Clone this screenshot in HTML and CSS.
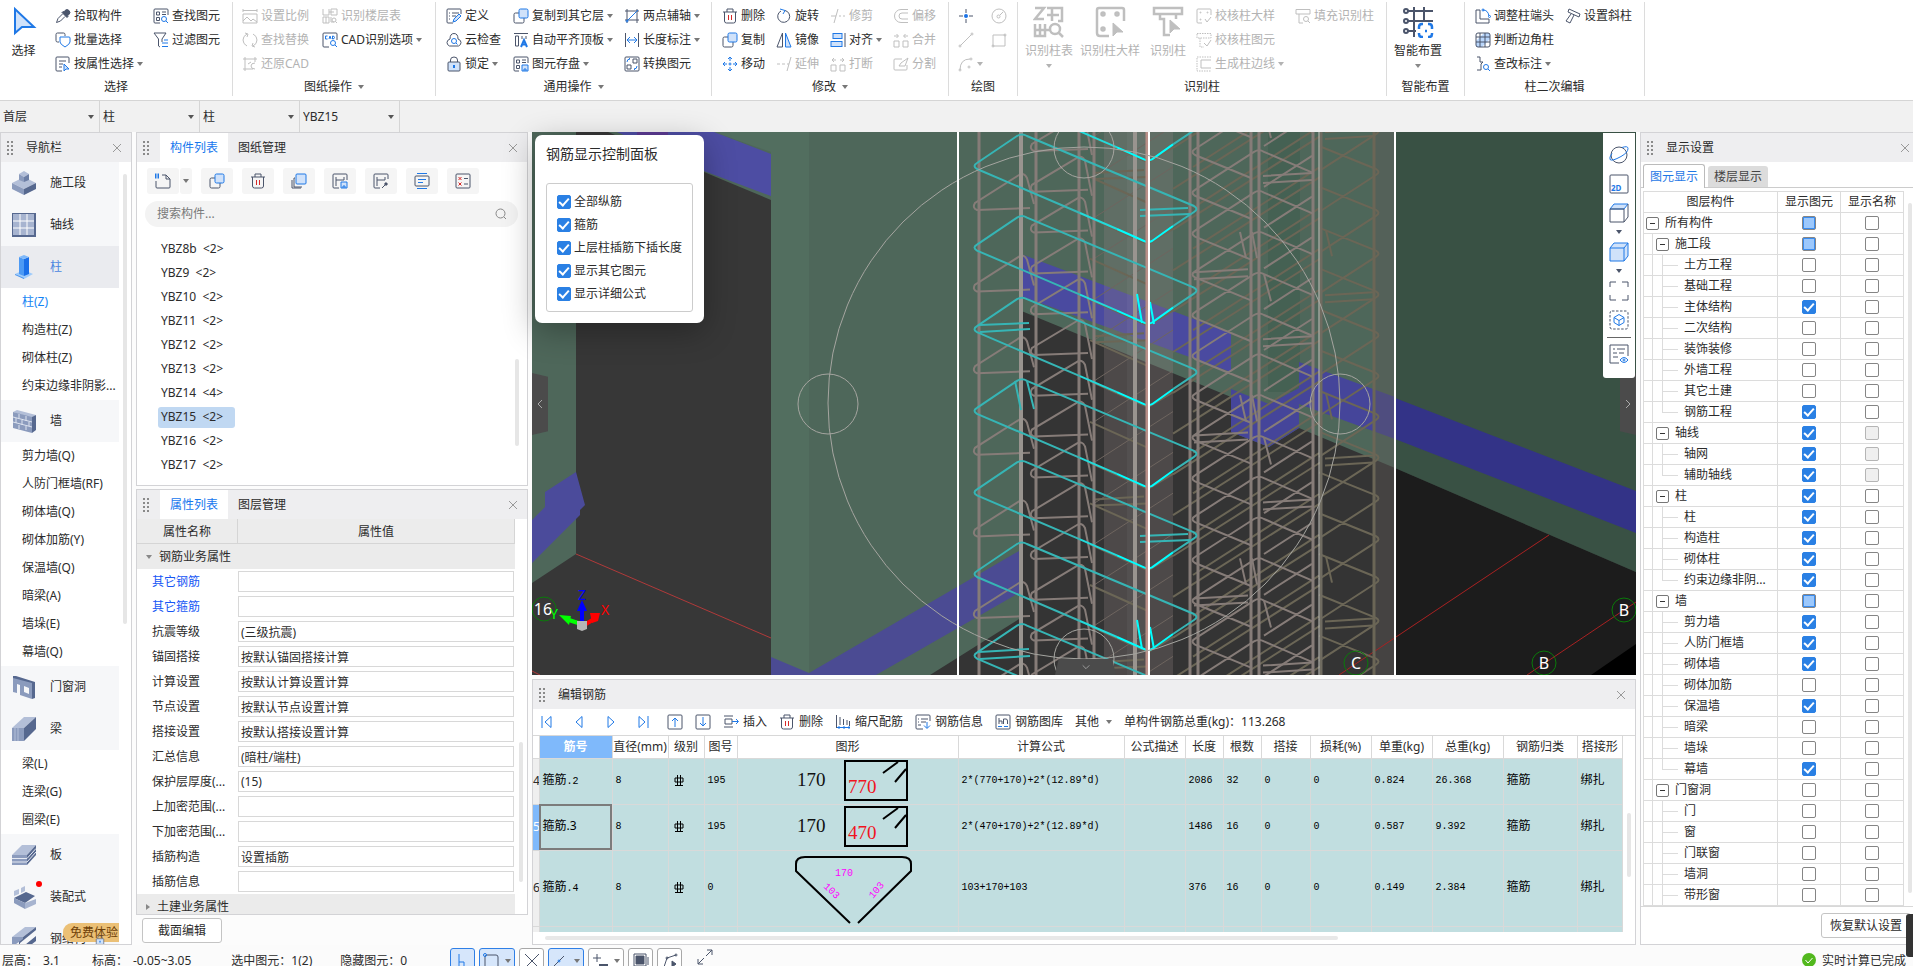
FILE: index.html
```
<!DOCTYPE html>
<html lang="zh-CN">
<head>
    <meta charset="UTF-8">
    <meta name="viewport" content="width=device-width, initial-scale=1.0">
    <title>钢筋三维</title>
    <link rel="stylesheet" href="styles.css">
</head>
<body>
    <!-- icon sprite -->
    <svg class="sprite" aria-hidden="true">
        <symbol id="i-cursor" viewBox="0 0 32 32"><path class="af" stroke-width="2" d="M7 3v24l7-6h12z"/></symbol>
        <symbol id="i-dropper" viewBox="0 0 16 16"><path fill="currentColor" d="M10 2.500q2-2 4 0t0 4l-1.500 1 .5 1-1 1-5-5 1-1 1 .5z"/><path d="M7.500 6L3 10.500 1.500 14.500 5.500 13 10 8.500"/></symbol>
        <symbol id="i-batch" viewBox="0 0 16 16"><path d="M4 10H2.500Q1 10 1 8.500v-6Q1 1 2.500 1h6Q10 1 10 2.500V4"/><path class="a" d="M5 5h9q1 0 1 1v4q0 2-5 5-5-3-5-5z"/></symbol>
        <symbol id="i-attr" viewBox="0 0 16 16"><path d="M14 7V2q0-1-1-1H2Q1 1 1 2v12q0 1 1 1h5M4 5h7M4 8h4M4 11h3"/><path class="af" d="M9 8v7l2-2h3z"/></symbol>
        <symbol id="i-find" viewBox="0 0 16 16"><path d="M15 7V2q0-1-1-1H2Q1 1 1 2v12q0 1 1 1h5M3.500 4h3v3h-3zM9 4h4M9 6.500h4M3.500 9.500h3v3h-3z"/><circle class="a" cx="11" cy="11" r="2.500"/><path class="a" d="M13 13l2 2"/></symbol>
        <symbol id="i-filter" viewBox="0 0 16 16"><path d="M1 1h12L9 7v3M1 1l4.500 6v7L7 15"/><path class="a" d="M9 11h6M9 14.500h6M11 8h4"/></symbol>
        <symbol id="i-scale" viewBox="0 0 16 16"><path d="M1 1v3M15 1v3M1 2.500h14M1 6h14v9H1zM1 13l4-4 4 4 2-2 4 3"/></symbol>
        <symbol id="i-swap" viewBox="0 0 16 16"><path d="M5 2Q1 4 1 8t4 6M11 2q4 2 4 6t-4 6M3 1l3 1-1 3M13 15l-3-1 1-3"/></symbol>
        <symbol id="i-restore" viewBox="0 0 16 16"><path d="M1 3h14M1 13h10M3 1v14M13 1v5M13 7q-4 0-4 3t4 3M6 8l3-2"/></symbol>
        <symbol id="i-floor" viewBox="0 0 16 16"><path d="M1 1v6h6V1M7 4h5M9 1h6v6H9zM1 9h6v6H1zM4 9v6M9 9v5h3"/><circle cx="12" cy="12" r="2"/><path d="M13.500 13.500L15 15"/></symbol>
        <symbol id="i-cad" viewBox="0 0 16 16"><path d="M15 8V2q0-1-1-1H2Q1 1 1 2v12q0 1 1 1h5"/><path class="a" d="M5.500 4H3.500v3h2M7 7l1-3 1 3M10.500 4v3q2 0 2-1.500T10.500 4M13 13l2 2"/><circle class="a" cx="11" cy="11" r="2.500"/></symbol>
        <symbol id="i-define" viewBox="0 0 16 16"><path d="M15 6V2q0-1-1-1H2Q1 1 1 2v12q0 1 1 1h5M3 5h1M6 5h7M3 8h1M6 8h4M3 11h1"/><path class="af" d="M7 14l1-3 5-5 2 2-5 5z"/></symbol>
        <symbol id="i-cloud" viewBox="0 0 16 16"><path d="M3.500 14Q1 13 1 10.500T4 7q0-5.500 4-5.500T12 7q3 1 3 3.500T12.500 14z"/><circle class="a" cx="8" cy="9" r="2.500"/><path class="a" d="M10 11l1.500 1.500"/></symbol>
        <symbol id="i-lock" viewBox="0 0 16 16"><path d="M4.500 6V4q0-3 3.500-3t3.500 3v2"/><rect class="lf" x="2" y="6" width="12" height="9" rx="1"/><path class="a" stroke-width="2" d="M8 9v3"/></symbol>
        <symbol id="i-copy" viewBox="0 0 16 16"><rect x="1" y="5" width="10" height="10" rx="1.500"/><rect class="af" x="6" y="1" width="9" height="9" rx="1.500"/></symbol>
        <symbol id="i-top" viewBox="0 0 16 16"><path d="M1 1.500h14M2.500 4v10h3V4zM9 4v3M13 4v3"/><path class="a" stroke-width="2" d="M8 15l3-7 3 7M9 12.500h4"/></symbol>
        <symbol id="i-save" viewBox="0 0 16 16"><path d="M15 7V2q0-1-1-1H2Q1 1 1 2v12q0 1 1 1h4M3.500 4h3v3h-3zM9 4h4M9 6.500h4M3.500 9.500h3v3h-3z"/><path class="af" d="M9 9h6v6H9zM11 15v-2h2v2"/></symbol>
        <symbol id="i-axis" viewBox="0 0 16 16"><path d="M1 3h14M1 12h14M3 1v14M13 1v14"/><path class="a" d="M3 13L14 2"/><circle class="a" cx="3" cy="13" r="1"/></symbol>
        <symbol id="i-length" viewBox="0 0 16 16"><path d="M1.500 1v14M14.500 1v14"/><path class="a" d="M3 8h10M6 5L3 8l3 3M10 5l3 3-3 3"/></symbol>
        <symbol id="i-convert" viewBox="0 0 16 16"><rect x="1" y="1" width="14" height="14" rx="1"/><path d="M9 3h4v4H9zM3 9h4v4H3z"/><path class="a" d="M3 6q0-3 3-3L5 2M13 10q0 3-3 3l1 1"/></symbol>
        <symbol id="i-trash" viewBox="0 0 16 16"><path d="M1 4h14M5 4V1h6v3M2.500 4v9q0 2 2 2h7q2 0 2-2V4"/><path class="r" d="M6.500 7v5M9.500 7v5"/></symbol>
        <symbol id="i-rotate" viewBox="0 0 16 16"><path d="M9 2.500a6 6 0 1 1-4 .5"/><path class="a" d="M4 1l5 1.500L7 6"/></symbol>
        <symbol id="i-trim" viewBox="0 0 16 16"><path d="M1 8h5M9 8h2M13 8h2M4 15L8 1"/></symbol>
        <symbol id="i-offset" viewBox="0 0 16 16"><path d="M15 1.500H8a6 6 0 0 0 0 13h7M15 5H9a3 3 0 0 0 0 6h6"/></symbol>
        <symbol id="i-mirror" viewBox="0 0 16 16"><path d="M6.500 1v14H1z"/><path class="af" d="M9.500 1v14H15z"/></symbol>
        <symbol id="i-align" viewBox="0 0 16 16"><path d="M15 1v14"/><rect class="af" x="3" y="1.500" width="9" height="5"/><rect class="af" x="1" y="9.500" width="11" height="5"/></symbol>
        <symbol id="i-merge" viewBox="0 0 16 16"><path d="M1 9h5v6H1zM10 9h5v6h-5zM1 4h4M3.500 2l2 2-2 2M15 4h-4M12.500 2l-2 2 2 2"/></symbol>
        <symbol id="i-break" viewBox="0 0 16 16"><path d="M1 9h5v6H1zM10 9h5v6h-5zM2 4h4M4 2L2 4l2 2M14 4h-4M12 2l2 2-2 2"/></symbol>
        <symbol id="i-move" viewBox="0 0 16 16"><path class="a" d="M8 1v4M8 11v4M1 8h4M11 8h4M6 3l2-2 2 2M6 13l2 2 2-2M3 6L1 8l2 2M13 6l2 2-2 2"/><circle class="a" cx="8" cy="8" r="1"/></symbol>
        <symbol id="i-extend" viewBox="0 0 16 16"><path d="M1 8h3M6 8h3M11 8h2M11 15L15 1"/></symbol>
        <symbol id="i-split" viewBox="0 0 16 16"><path d="M9 3H2Q1 3 1 4v9q0 1 1 1h11q1 0 1-1V9M6 10l2-3 7-5-3 8z"/></symbol>
        <symbol id="i-point" viewBox="0 0 16 16"><path d="M8 1v4M8 11v4M1 8h4M11 8h4"/><circle cx="8" cy="8" r="2" fill="#1a73e8" stroke="none"/></symbol>
        <symbol id="i-circle" viewBox="0 0 16 16"><circle cx="8" cy="8" r="7"/><circle cx="7.500" cy="8.500" r="1.500"/><path d="M9 7l3-3"/></symbol>
        <symbol id="i-line" viewBox="0 0 16 16"><path d="M2.500 13.500l11-11"/><circle cx="2" cy="14" r="1"/><circle cx="14" cy="2" r="1"/></symbol>
        <symbol id="i-rect" viewBox="0 0 16 16"><path d="M2 3h12v11H2z"/><circle cx="2" cy="14" r="1"/><circle cx="14" cy="3" r="1"/></symbol>
        <symbol id="i-arc" viewBox="0 0 16 16"><path d="M2 14Q2 3 12 3"/><circle cx="2" cy="14" r="1"/><circle cx="13" cy="3" r="1"/><circle cx="11" cy="11" r="1"/></symbol>
        <symbol id="i-coltable" viewBox="0 0 32 32"><g stroke-width="2.500"><path d="M2 2h9L2 13h9M14 2h15v13h-4M14 9h12M19 2v13M2 18v12h10V18M2 24h15M7 18v12"/><circle cx="22" cy="23" r="5"/><path d="M26 27l4 4"/></g></symbol>
        <symbol id="i-coldetail" viewBox="0 0 32 32"><g stroke-width="2.500"><path d="M30 15V4q0-2-2-2H5Q3 2 3 4v23q0 3 3 3h9"/><circle cx="9" cy="8" r="1.500"/><circle cx="23" cy="8" r="1.500"/><circle cx="9" cy="23" r="1.500"/></g><path fill="currentColor" d="M19 17v13l4-4h6z"/></symbol>
        <symbol id="i-colpick" viewBox="0 0 32 32"><path stroke-width="2.500" d="M2 2h28v6H2zM8 8v5h4v16h6M24 8v5"/><path fill="currentColor" d="M18 14v13l4-4h6z"/></symbol>
        <symbol id="i-check1" viewBox="0 0 16 16"><path d="M15 7V2q0-1-1-1H2Q1 1 1 2v12q0 1 1 1h4M9 11l2 3 4-5"/><circle cx="4.500" cy="4.500" r=".5"/><circle cx="11.500" cy="4.500" r=".5"/><circle cx="4.500" cy="11.500" r=".5"/></symbol>
        <symbol id="i-check2" viewBox="0 0 16 16"><path stroke-dasharray="1.500 1" d="M1 1.500h14V6H1zM4 6v9h4"/><path d="M8 11l3 3 4-6"/></symbol>
        <symbol id="i-edge" viewBox="0 0 16 16"><path stroke-dasharray="1.500 1" d="M15 1H1v14h14"/><path d="M15 4H5v8h10"/></symbol>
        <symbol id="i-fillcol" viewBox="0 0 16 16"><path d="M1 1.500h14V6H1zM4 6v9h4"/><circle cx="11" cy="11" r="2.500"/><path d="M13 13l2 2"/></symbol>
        <symbol id="i-grid" viewBox="0 0 32 32"><g stroke-width="2"><path d="M6 5h25M6 15h25M6 25h8M12 1v30M22 1v13"/><circle cx="4" cy="5" r="2"/><circle cx="4" cy="15" r="2"/><circle cx="4" cy="25" r="2"/></g><path class="a" stroke-width="2.500" d="M17 23v-2q0-3 3-3h1M26 18h1q3 0 3 3v2M30 27v1q0 3-3 3h-1M21 31h-1q-3 0-3-3v-1M23 25h2"/></symbol>
        <symbol id="i-end" viewBox="0 0 16 16"><path d="M1 2h4v9h9v4H1z"/><path class="a" d="M8 2q5 0 6 6"/><circle class="a" cx="8" cy="2" r="1"/><circle class="a" cx="14.500" cy="8.500" r="1"/></symbol>
        <symbol id="i-corner" viewBox="0 0 16 16"><path fill="#b9d6fb" d="M9 1h6v6L7 15H1V9z" stroke="none"/><rect x="1" y="1" width="14" height="14" rx="2"/><path d="M5 1v14M10 1v14M1 5h14M1 10h14"/></symbol>
        <symbol id="i-brace" viewBox="0 0 16 16"><path d="M2 1h3v5h3L6 8v6H2"/><circle class="a" cx="11" cy="11" r="2.500"/><path class="a" d="M13 13l2 2"/></symbol>
        <symbol id="i-slant" viewBox="0 0 16 16"><path d="M4 1l11 5-1 3L3 4zM6 6l-5 7 4 2 4-8"/></symbol>
        <symbol id="i-close" viewBox="0 0 16 16"><path d="M4 4l8 8M12 4l-8 8"/></symbol>
        <symbol id="i-new" viewBox="0 0 16 16"><path d="M7 2h4l4 4v8q0 1-1 1H2q-1 0-1-1V8M11 2v4h4"/><path class="a" stroke-width="5" stroke-dasharray="1.500 1" d="M0 3h5"/></symbol>
        <symbol id="i-layers" viewBox="0 0 16 16"><path d="M4 5H3v9h8M1 7v8h9"/><rect class="af" x="5" y="1" width="10" height="10" rx="1"/></symbol>
        <symbol id="i-saveas" viewBox="0 0 16 16"><path d="M15 7V2q0-1-1-1H2Q1 1 1 2v12q0 1 1 1h5M4 4v9M4 7h8V4"/><path class="af" d="M9 9h6v6H9zM11 15v-2h2v2"/></symbol>
        <symbol id="i-pickas" viewBox="0 0 16 16"><path d="M15 6V2q0-1-1-1H2Q1 1 1 2v12q0 1 1 1h5M4 4v9M4 7h8V4M9 15l4-4"/><path stroke-width="3" d="M12 12l2-2"/></symbol>
        <symbol id="i-list" viewBox="0 0 16 16"><rect x="1" y="3" width="14" height="10" rx="1"/><path class="a" d="M3 .5h10M3 15.500h10M4 6.500h8M4 9.500h5"/></symbol>
        <symbol id="i-check-list" viewBox="0 0 16 16"><rect x="1" y="1" width="14" height="14" rx="1"/><path d="M9 5.500h4M9 11h4"/><path class="r" d="M3.500 4l3 3M6.500 4l-3 3M3.500 9.500l3 3M6.500 9.500l-3 3"/></symbol>
        <symbol id="i-search" viewBox="0 0 16 16"><circle cx="7.500" cy="7.500" r="4.500"/><path d="M11 11l2 2"/></symbol>
        <symbol id="i-first" viewBox="0 0 16 16"><path class="a" d="M3 2v12M12 2.500v11L6 8z"/></symbol>
        <symbol id="i-prev" viewBox="0 0 16 16"><path class="a" d="M11 2.500v11L5 8z"/></symbol>
        <symbol id="i-next" viewBox="0 0 16 16"><path class="a" d="M5 2.500v11L11 8z"/></symbol>
        <symbol id="i-last" viewBox="0 0 16 16"><path class="a" d="M13 2v12M4 2.500v11L10 8z"/></symbol>
        <symbol id="i-up" viewBox="0 0 16 16"><rect x="1" y="1" width="14" height="14" rx="1"/><path class="a" d="M8 13V4M5 7l3-3 3 3"/></symbol>
        <symbol id="i-down" viewBox="0 0 16 16"><rect x="1" y="1" width="14" height="14" rx="1"/><path class="a" d="M8 3v9M5 9l3 3 3-3"/></symbol>
        <symbol id="i-insert" viewBox="0 0 16 16"><path d="M1 2h9M1 13h9M2 5h7v5H2z"/><path class="a" d="M9 7.500h6M13 5l2.500 2.500L13 10"/></symbol>
        <symbol id="i-ruler" viewBox="0 0 16 16"><path d="M1.500 1v13M5 3v8M8.500 5v6M12 6v5M14.500 7v5"/><path class="a" d="M2 13.500h13M4 12v3M9 12v3M14 12v3"/></symbol>
        <symbol id="i-info" viewBox="0 0 16 16"><path d="M15 7V2q0-1-1-1H2Q1 1 1 2v12q0 1 1 1h6M3 5h1M6 5h7M3 8h1M6 8h5M3 11h3"/><path class="a" d="M12 8v6M9 11.500l3 3 3-3"/></symbol>
        <symbol id="i-lib" viewBox="0 0 16 16"><rect x="1" y="1" width="14" height="14" rx="1"/><path d="M4 4v6M4 7h3v3M8.500 5H11q1.500 0 1.500 2v3M8.500 5v5"/><path class="a" d="M3 12.500h4M9 12.500h4"/></symbol>
        <symbol id="i-orbit" viewBox="0 0 20 20"><circle cx="10" cy="10" r="8"/><path class="a" d="M13 2.500q6-2 6 1 0 4-7 8-9 5-11 3-1-2 2-6"/></symbol>
        <symbol id="i-2d" viewBox="0 0 20 20"><rect x="1" y="1" width="18" height="18" rx="1"/></symbol>
        <symbol id="i-cube" viewBox="0 0 20 20"><path class="af" d="M1 6l4-5h14l-4 5z"/><path d="M1 6h14v13H1zM15 19l4-5V1"/></symbol>
        <symbol id="i-cube-b" viewBox="0 0 20 20"><path class="af" d="M1 6l4-5h14v13l-4 5H1zM1 6h14v13M15 6l4-5"/></symbol>
        <symbol id="i-fit" viewBox="0 0 20 20"><path d="M1 6V1h6M13 1h6v5M19 14v5h-6M7 19H1v-5"/></symbol>
        <symbol id="i-sel3d" viewBox="0 0 20 20"><rect x="1" y="1" width="18" height="18" rx="2" stroke-dasharray="2.500 1.500"/><path class="a" d="M10 4.500l5 3v5l-5 3-5-3v-5zM5 7.500l5 3 5-3M10 10.500v5"/></symbol>
        <symbol id="i-view" viewBox="0 0 20 20"><path d="M19 12V1H1v18h9M4 5h2M8 5h8M4 9h4M10 9h5M4 13h5"/><path class="a" d="M11 16q4-5 8 0-4 5-8 0z"/><circle class="a" cx="15" cy="16" r="1"/></symbol>
        <symbol id="n-stage" viewBox="0 0 24 24"><path fill="#b3bfd8" d="M0 12l12-6 12 6-12 6z"/><path fill="#8b9bbd" d="M0 12l12 6v6L0 18z"/><path fill="#56688f" d="M24 12l-12 6v6l12-6z"/><path fill="#b3bfd8" d="M7 3l5-3 5 3-5 3z"/><path fill="#8b9bbd" d="M7 3l5 3v5l-5-2z"/><path fill="#6c7ea5" d="M17 3l-5 3v5l5-2z"/></symbol>
        <symbol id="n-axis" viewBox="0 0 24 24"><path fill="#56688f" d="M0 0h24v24H0z"/><path fill="#a7b4d0" d="M1 1h21v21H1z"/><path stroke="#fff" d="M8 1v21M15 1v21M1 8h21M1 15h21"/></symbol>
        <symbol id="n-col" viewBox="0 0 24 24"><path fill="#9ecbfb" d="M3 19l9-4 9 4-9 5z"/><path fill="#4a94ec" d="M3 19l9 4v1l-9-4z"/><path fill="#4d9af4" d="M7 2l5 2v17l-5-2z"/><path fill="#1a6fe8" d="M17 2l-5 2v17l5-2z"/><path fill="#7db8fb" d="M7 2l5-2 5 2-5 2z"/></symbol>
        <symbol id="n-wall" viewBox="0 0 24 24"><path fill="#b3bfd8" d="M1 3l4-2 19 5-5 3z"/><path fill="#8b9bbd" d="M1 3l19 5v16L1 19z"/><path fill="#56688f" d="M20 8l4-2v15l-4 3z"/><path stroke="#dde3ef" d="M1 8l19 5M1 13l19 5M7 5v4M14 7v5M10 11v5M4 9v5M17 13v4M7 16v4M14 17v4"/></symbol>
        <symbol id="n-door" viewBox="0 0 24 24"><path fill="#56688f" d="M1 1h3l19 6v16l-3 1V9L1 4z"/><path fill="#8b9bbd" fill-rule="evenodd" d="M1 3l19 5v16l-12-4V10l-3-1v9l-4-1zM12 11v6l5 2v-6z"/></symbol>
        <symbol id="n-beam" viewBox="0 0 24 24"><path fill="#b3bfd8" d="M0 11L12 0h12L12 11z"/><path fill="#8b9bbd" d="M0 11h12v13H0z"/><path fill="#56688f" d="M12 11L24 0v12L12 24z"/><path stroke="#b3bfd8" d="M3 11v13M6 11v13"/></symbol>
        <symbol id="n-slab" viewBox="0 0 24 24"><path fill="#b3bfd8" d="M0 12L10 2h14L15 12z"/><path fill="#8b9bbd" d="M0 12h15v10H0z"/><path fill="#56688f" d="M15 12L24 2v10l-9 10z"/><path stroke="#e5e9f2" d="M0 15.500h15l9-10M0 19h15l9-10"/></symbol>
        <symbol id="n-prefab" viewBox="0 0 24 24"><path fill="#b3bfd8" d="M2 6l5-2v5l-5 2zM9 3l4-2v5l-4 2z"/><path fill="#56688f" d="M2 13l12-6 9 4-10 7z"/><path fill="#8b9bbd" d="M2 13l11 5v6L2 18z"/><path fill="#a7b4d0" d="M24 14l-11 4v6l11-5z"/></symbol>
        <symbol id="n-steel" viewBox="0 0 24 24"><path fill="#b3bfd8" d="M0 10L13 0h11L11 10z"/><path fill="#56688f" d="M11 10L24 0v3L8 16v6l16-13v5L11 24H7V11z"/><path fill="#8b9bbd" d="M0 10h11v2L0 20z"/></symbol>
        <symbol id="g-rebar" viewBox="0 0 10 12"><path stroke="#000" d="M3.500 0v10M6.500 0v10M1 3h8v4H1zM1 10.500h8"/></symbol>
    </svg>

    <header class="ribbon">
        <section class="group g-select">
            <div class="tools">
                <button class="big"><svg class="ico"><use href="#i-cursor"/></svg>选择</button>
                <div class="col">
                    <button class="tool"><svg class="ico"><use href="#i-dropper"/></svg>拾取构件</button>
                    <button class="tool"><svg class="ico"><use href="#i-batch"/></svg>批量选择</button>
                    <button class="tool drop"><svg class="ico"><use href="#i-attr"/></svg>按属性选择</button>
                </div>
                <div class="col">
                    <button class="tool"><svg class="ico"><use href="#i-find"/></svg>查找图元</button>
                    <button class="tool"><svg class="ico"><use href="#i-filter"/></svg>过滤图元</button>
                </div>
            </div>
            <h2>选择</h2>
        </section>
        <section class="group g-drawing">
            <div class="tools">
                <div class="col">
                    <button class="tool" disabled><svg class="ico"><use href="#i-scale"/></svg>设置比例</button>
                    <button class="tool" disabled><svg class="ico"><use href="#i-swap"/></svg>查找替换</button>
                    <button class="tool" disabled><svg class="ico"><use href="#i-restore"/></svg>还原CAD</button>
                </div>
                <div class="col">
                    <button class="tool" disabled><svg class="ico"><use href="#i-floor"/></svg>识别楼层表</button>
                    <button class="tool drop"><svg class="ico"><use href="#i-cad"/></svg>CAD识别选项</button>
                </div>
            </div>
            <h2 class="drop">图纸操作</h2>
        </section>
        <section class="group g-common">
            <div class="tools">
                <div class="col">
                    <button class="tool"><svg class="ico"><use href="#i-define"/></svg>定义</button>
                    <button class="tool"><svg class="ico"><use href="#i-cloud"/></svg>云检查</button>
                    <button class="tool drop"><svg class="ico"><use href="#i-lock"/></svg>锁定</button>
                </div>
                <div class="col">
                    <button class="tool drop"><svg class="ico"><use href="#i-copy"/></svg>复制到其它层</button>
                    <button class="tool drop"><svg class="ico"><use href="#i-top"/></svg>自动平齐顶板</button>
                    <button class="tool drop"><svg class="ico"><use href="#i-save"/></svg>图元存盘</button>
                </div>
                <div class="col">
                    <button class="tool drop"><svg class="ico"><use href="#i-axis"/></svg>两点辅轴</button>
                    <button class="tool drop"><svg class="ico"><use href="#i-length"/></svg>长度标注</button>
                    <button class="tool"><svg class="ico"><use href="#i-convert"/></svg>转换图元</button>
                </div>
            </div>
            <h2 class="drop">通用操作</h2>
        </section>
        <section class="group g-modify">
            <div class="tools">
                <div class="col">
                    <button class="tool"><svg class="ico"><use href="#i-trash"/></svg>删除</button>
                    <button class="tool"><svg class="ico"><use href="#i-copy"/></svg>复制</button>
                    <button class="tool"><svg class="ico"><use href="#i-move"/></svg>移动</button>
                </div>
                <div class="col">
                    <button class="tool"><svg class="ico"><use href="#i-rotate"/></svg>旋转</button>
                    <button class="tool"><svg class="ico"><use href="#i-mirror"/></svg>镜像</button>
                    <button class="tool" disabled><svg class="ico"><use href="#i-extend"/></svg>延伸</button>
                </div>
                <div class="col">
                    <button class="tool" disabled><svg class="ico"><use href="#i-trim"/></svg>修剪</button>
                    <button class="tool drop"><svg class="ico"><use href="#i-align"/></svg>对齐</button>
                    <button class="tool" disabled><svg class="ico"><use href="#i-break"/></svg>打断</button>
                </div>
                <div class="col">
                    <button class="tool" disabled><svg class="ico"><use href="#i-offset"/></svg>偏移</button>
                    <button class="tool" disabled><svg class="ico"><use href="#i-merge"/></svg>合并</button>
                    <button class="tool" disabled><svg class="ico"><use href="#i-split"/></svg>分割</button>
                </div>
            </div>
            <h2 class="drop">修改</h2>
        </section>
        <section class="group g-draw">
            <div class="tools">
                <div class="col">
                    <button class="tool" aria-label="点"><svg class="ico"><use href="#i-point"/></svg></button>
                    <button class="tool" aria-label="直线" disabled><svg class="ico"><use href="#i-line"/></svg></button>
                    <button class="tool drop" aria-label="弧" disabled><svg class="ico"><use href="#i-arc"/></svg></button>
                </div>
                <div class="col">
                    <button class="tool" aria-label="圆" disabled><svg class="ico"><use href="#i-circle"/></svg></button>
                    <button class="tool" aria-label="矩形" disabled><svg class="ico"><use href="#i-rect"/></svg></button>
                </div>
            </div>
            <h2>绘图</h2>
        </section>
        <section class="group g-detect">
            <div class="tools">
                <button class="big bigdrop" disabled><svg class="ico"><use href="#i-coltable"/></svg>识别柱表</button>
                <button class="big" disabled><svg class="ico"><use href="#i-coldetail"/></svg>识别柱大样</button>
                <button class="big" disabled><svg class="ico"><use href="#i-colpick"/></svg>识别柱</button>
                <div class="col">
                    <button class="tool" disabled><svg class="ico"><use href="#i-check1"/></svg>校核柱大样</button>
                    <button class="tool" disabled><svg class="ico"><use href="#i-check2"/></svg>校核柱图元</button>
                    <button class="tool drop" disabled><svg class="ico"><use href="#i-edge"/></svg>生成柱边线</button>
                </div>
                <div class="col">
                    <button class="tool" disabled><svg class="ico"><use href="#i-fillcol"/></svg>填充识别柱</button>
                </div>
            </div>
            <h2>识别柱</h2>
        </section>
        <section class="group g-smart">
            <div class="tools">
                <button class="big bigdrop"><svg class="ico"><use href="#i-grid"/></svg>智能布置</button>
            </div>
            <h2>智能布置</h2>
        </section>
        <section class="group g-edit">
            <div class="tools">
                <div class="col">
                    <button class="tool"><svg class="ico"><use href="#i-end"/></svg>调整柱端头</button>
                    <button class="tool"><svg class="ico"><use href="#i-corner"/></svg>判断边角柱</button>
                    <button class="tool drop"><svg class="ico"><use href="#i-brace"/></svg>查改标注</button>
                </div>
                <div class="col">
                    <button class="tool"><svg class="ico"><use href="#i-slant"/></svg>设置斜柱</button>
                </div>
            </div>
            <h2>柱二次编辑</h2>
        </section>
    </header>

    <div class="filters">
        <label class="pick"><select aria-label="楼层"><option>首层</option></select></label>
        <label class="pick"><select aria-label="构件大类"><option>柱</option></select></label>
        <label class="pick"><select aria-label="构件类型"><option>柱</option></select></label>
        <label class="pick"><select aria-label="构件"><option>YBZ15</option></select></label>
    </div>

    <main class="work">
        <nav class="panel nav">
            <div class="panel-head"><i class="grip"></i><h3>导航栏</h3><button class="close" aria-label="关闭"><svg class="ico"><use href="#i-close"/></svg></button></div>
            <div class="nav-body">
                <div class="nav-list">
                    <a class="cat" href="#"><svg><use href="#n-stage"/></svg>施工段</a>
                    <a class="cat" href="#"><svg><use href="#n-axis"/></svg>轴线</a>
                    <a class="cat active" href="#"><svg><use href="#n-col"/></svg>柱</a>
                    <a class="sub active" href="#">柱(Z)</a>
                    <a class="sub" href="#">构造柱(Z)</a>
                    <a class="sub" href="#">砌体柱(Z)</a>
                    <a class="sub" href="#">约束边缘非阴影...</a>
                    <a class="cat" href="#"><svg><use href="#n-wall"/></svg>墙</a>
                    <a class="sub" href="#">剪力墙(Q)</a>
                    <a class="sub" href="#">人防门框墙(RF)</a>
                    <a class="sub" href="#">砌体墙(Q)</a>
                    <a class="sub" href="#">砌体加筋(Y)</a>
                    <a class="sub" href="#">保温墙(Q)</a>
                    <a class="sub" href="#">暗梁(A)</a>
                    <a class="sub" href="#">墙垛(E)</a>
                    <a class="sub" href="#">幕墙(Q)</a>
                    <a class="cat" href="#"><svg><use href="#n-door"/></svg>门窗洞</a>
                    <a class="cat" href="#"><svg><use href="#n-beam"/></svg>梁</a>
                    <a class="sub" href="#">梁(L)</a>
                    <a class="sub" href="#">连梁(G)</a>
                    <a class="sub" href="#">圈梁(E)</a>
                    <a class="cat" href="#"><svg><use href="#n-slab"/></svg>板</a>
                    <a class="cat dot" href="#"><svg><use href="#n-prefab"/></svg>装配式</a>
                    <a class="cat" href="#"><svg><use href="#n-steel"/></svg>钢结构<span class="tag">免费体验</span><svg class="ico locked"><use href="#i-lock"/></svg></a>
                </div>
                <i class="bar"></i>
            </div>
        </nav>

        <div class="side">
            <section class="panel comps">
                <div class="panel-head"><i class="grip"></i><button class="tab on">构件列表</button><button class="tab">图纸管理</button><button class="close" aria-label="关闭"><svg class="ico"><use href="#i-close"/></svg></button></div>
                <div class="comp-tools">
                    <div class="pair"><button aria-label="新建"><svg class="ico"><use href="#i-new"/></svg></button><button class="drop" aria-label="更多"></button></div>
                    <button aria-label="复制"><svg class="ico"><use href="#i-copy"/></svg></button>
                    <button aria-label="删除"><svg class="ico"><use href="#i-trash"/></svg></button>
                    <button aria-label="层间复制"><svg class="ico"><use href="#i-layers"/></svg></button>
                    <button aria-label="存档"><svg class="ico"><use href="#i-saveas"/></svg></button>
                    <button aria-label="提取"><svg class="ico"><use href="#i-pickas"/></svg></button>
                    <button aria-label="排序"><svg class="ico"><use href="#i-list"/></svg></button>
                    <button aria-label="检查"><svg class="ico"><use href="#i-check-list"/></svg></button>
                </div>
                <label class="search"><input type="text" placeholder="搜索构件..." aria-label="搜索构件"><svg class="ico"><use href="#i-search"/></svg></label>
                <div class="comp-body">
                    <ul>
                        <li><a href="#">YBZ8b  &lt;2&gt;</a></li>
                        <li><a href="#">YBZ9  &lt;2&gt;</a></li>
                        <li><a href="#">YBZ10  &lt;2&gt;</a></li>
                        <li><a href="#">YBZ11  &lt;2&gt;</a></li>
                        <li><a href="#">YBZ12  &lt;2&gt;</a></li>
                        <li><a href="#">YBZ13  &lt;2&gt;</a></li>
                        <li><a href="#">YBZ14  &lt;4&gt;</a></li>
                        <li><a href="#" class="on">YBZ15  &lt;2&gt;</a></li>
                        <li><a href="#">YBZ16  &lt;2&gt;</a></li>
                        <li><a href="#">YBZ17  &lt;2&gt;</a></li>
                    </ul>
                    <i class="bar"></i>
                </div>
            </section>

            <section class="panel props">
                <div class="panel-head"><i class="grip"></i><button class="tab on">属性列表</button><button class="tab">图层管理</button><button class="close" aria-label="关闭"><svg class="ico"><use href="#i-close"/></svg></button></div>
                <div class="prop-body">
                    <div class="prop-list">
                        <div class="prop-head"><span>属性名称</span><span>属性值</span></div>
                        <div class="prop-sec open">钢筋业务属性</div>
                        <div class="prop link"><label for="p1">其它钢筋</label><input id="p1" type="text"></div>
                        <div class="prop link"><label for="p2">其它箍筋</label><input id="p2" type="text"></div>
                        <div class="prop"><label for="p3">抗震等级</label><input id="p3" type="text" value="(三级抗震)"></div>
                        <div class="prop"><label for="p4">锚固搭接</label><input id="p4" type="text" value="按默认锚固搭接计算"></div>
                        <div class="prop"><label for="p5">计算设置</label><input id="p5" type="text" value="按默认计算设置计算"></div>
                        <div class="prop"><label for="p6">节点设置</label><input id="p6" type="text" value="按默认节点设置计算"></div>
                        <div class="prop"><label for="p7">搭接设置</label><input id="p7" type="text" value="按默认搭接设置计算"></div>
                        <div class="prop"><label for="p8">汇总信息</label><input id="p8" type="text" value="(暗柱/端柱)"></div>
                        <div class="prop"><label for="p9">保护层厚度(...</label><input id="p9" type="text" value="(15)"></div>
                        <div class="prop"><label for="p10">上加密范围(...</label><input id="p10" type="text"></div>
                        <div class="prop"><label for="p11">下加密范围(...</label><input id="p11" type="text"></div>
                        <div class="prop"><label for="p12">插筋构造</label><input id="p12" type="text" value="设置插筋"></div>
                        <div class="prop"><label for="p13">插筋信息</label><input id="p13" type="text"></div>
                        <div class="prop-sec">土建业务属性</div>
                    </div>
                    <i class="bar"></i>
                </div>
            </section>
            <button class="btn">截面编辑</button>
        </div>

        <div class="center">
            <div class="view">
                <svg class="scene" viewBox="0 0 1104 543" preserveAspectRatio="xMidYMid slice">
                    <rect width="1104" height="543" fill="#4e675a"/>
                    <path fill="#526e5f" d="M182 0h95v543h-38V20z"/>
                    <path fill="#373737" d="M44 0h32l163 68v475H0v-92l44-29z"/>
                    <path fill="#4d4da3" d="M85 0h97l57 22v42l-67-25z"/>
                    <path fill="#5b3a92" d="M105 0h31v10h-31z"/>
                    <path fill="#4b4b9b" d="M44 340l9 33-5 5v5L0 431v-43l13-13v-15z"/>
                    <path stroke="#b03a3a" d="M44 422l195 84M0 539l8 4"/>
                    <path fill="#4b4b93" d="M239 525l38 16 210-122v42l-143 82H239z"/>
                    <path fill="#456153" d="M736 0h32v260h-32z"/>
                    <path fill="#343434" d="M398 543l89-56V178l212 87v35l38 15 30-19 96 40v207z"/>
                    <path fill="#4a4aa0" d="M489 122l210 79v39l-210-76z"/>
                    <path fill="#45459a" d="M699 257l38 15 30-16v-26l96 35v42l-96-35v24l-30 19-38-15z"/>
                    <path fill="#8f8080" opacity=".28" d="M572 0h69v543h-69z"/>
                    <path fill="#fff" opacity=".04" d="M595 0h21v543h-21z"/>
                    <path fill="#605a58" opacity=".4" d="M843 0h20v543h-20z"/>
                    <path fill="#395144" d="M863 0h241v440L863 336z"/>
                    <path fill="#333387" d="M863 266l241 93v42l-241-94z"/>
                    <path fill="#1c1c1c" d="M863 336l241 104v103H863z"/>
                    <path fill="#000" d="M1104 512v31h-45z"/>
                    <path stroke="#a82222" d="M807 543l210-140M995 543l109-73"/>
                    <g id="mesh"></g>
                    <g fill="none" stroke="#a5a5a0">
                        <circle cx="552" cy="271" r="256"/>
                        <circle cx="296" cy="272" r="30"/>
                        <circle cx="808" cy="272" r="30"/>
                        <circle cx="552" cy="16" r="30"/>
                        <circle cx="552" cy="527" r="30"/>
                    </g>
                    <path stroke="#fff" stroke-width="2" d="M426 0v543M863 0v543"/>
                    <g fill="none" stroke="#0a7a0a">
                        <circle cx="12" cy="477" r="12"/>
                        <circle cx="824" cy="531" r="12"/>
                        <circle cx="1012" cy="531" r="12"/>
                        <circle cx="1092" cy="478" r="12"/>
                    </g>
                    <g class="marks">
                        <text x="11" y="483">16</text>
                        <text x="824" y="537">C</text>
                        <text x="1012" y="537">B</text>
                        <text x="1092" y="484">B</text>
                    </g>
                    <path stroke="#0000ff" stroke-width="4" d="M50 490v-14"/>
                    <path fill="#0000ff" d="M45 479l5-11 5 11z"/>
                    <path stroke="#ff0000" stroke-width="4" d="M54 492l8-5"/>
                    <path fill="#ff0000" d="M58 481l10 0-2 8-6 2z"/>
                    <path stroke="#00ff00" stroke-width="4" d="M46 491l-9-3"/>
                    <path fill="#00ff00" d="M27 483l12 1-2 9z"/>
                    <path fill="#b5b5b5" d="M45 489h10v8l-5 2-5-2z"/>
                    <g class="axes">
                        <text x="50" y="468" fill="#0000ff">Z</text>
                        <text x="73" y="483" fill="#ff0000">X</text>
                        <text x="22" y="487" fill="#00ff00">Y</text>
                    </g>
                </svg>
                <form class="dialog">
                    <h3>钢筋显示控制面板</h3>
                    <fieldset>
                        <label><input type="checkbox" checked>全部纵筋</label>
                        <label><input type="checkbox" checked>箍筋</label>
                        <label><input type="checkbox" checked>上层柱插筋下插长度</label>
                        <label><input type="checkbox" checked>显示其它图元</label>
                        <label><input type="checkbox" checked>显示详细公式</label>
                    </fieldset>
                </form>
                <button class="fold left" aria-label="收起左侧"><svg viewBox="0 0 8 12"><path d="M6 2L2 6l4 4"/></svg></button>
                <button class="fold right" aria-label="收起右侧"><svg viewBox="0 0 8 12"><path d="M2 2l4 4-4 4"/></svg></button>
                <button class="fold bottom" aria-label="收起下方"><svg viewBox="0 0 12 8"><path d="M2 2l4 4 4-4"/></svg></button>
                <div class="view-tools">
                    <button aria-label="动态观察"><svg class="ico"><use href="#i-orbit"/></svg></button>
                    <button aria-label="二维" class="two-d"><svg class="ico"><use href="#i-2d"/></svg><span>2D</span></button>
                    <button aria-label="视图方向" class="drop"><svg class="ico"><use href="#i-cube"/></svg></button>
                    <button aria-label="显示样式" class="drop"><svg class="ico"><use href="#i-cube-b"/></svg></button>
                    <button aria-label="全屏"><svg class="ico"><use href="#i-fit"/></svg></button>
                    <button aria-label="局部三维"><svg class="ico"><use href="#i-sel3d"/></svg></button>
                    <hr>
                    <button aria-label="显示设置"><svg class="ico"><use href="#i-view"/></svg></button>
                </div>
            </div>

            <section class="panel rebar">
                <div class="panel-head"><i class="grip"></i><h3>编辑钢筋</h3><button class="close" aria-label="关闭"><svg class="ico"><use href="#i-close"/></svg></button></div>
                <div class="rebar-tools">
                    <button aria-label="首行"><svg class="ico"><use href="#i-first"/></svg></button>
                    <button aria-label="上一行"><svg class="ico"><use href="#i-prev"/></svg></button>
                    <button aria-label="下一行"><svg class="ico"><use href="#i-next"/></svg></button>
                    <button aria-label="末行"><svg class="ico"><use href="#i-last"/></svg></button>
                    <button aria-label="上移"><svg class="ico"><use href="#i-up"/></svg></button>
                    <button aria-label="下移"><svg class="ico"><use href="#i-down"/></svg></button>
                    <button><svg class="ico"><use href="#i-insert"/></svg>插入</button>
                    <button><svg class="ico"><use href="#i-trash"/></svg>删除</button>
                    <button><svg class="ico"><use href="#i-ruler"/></svg>缩尺配筋</button>
                    <button><svg class="ico"><use href="#i-info"/></svg>钢筋信息</button>
                    <button><svg class="ico"><use href="#i-lib"/></svg>钢筋图库</button>
                    <button class="drop">其他</button>
                    <span>单构件钢筋总重(kg)：113.268</span>
                </div>
                <div class="rebar-body">
                    <table>
                        <colgroup>
                            <col class="c6"><col class="c73"><col class="c56"><col class="c36"><col class="c33"><col class="c221"><col class="c166"><col class="c61"><col class="c38"><col class="c38"><col class="c49"><col class="c61"><col class="c61"><col class="c71"><col class="c74"><col>
                        </colgroup>
                        <thead>
                            <tr><th></th><th class="on">筋号</th><th>直径(mm)</th><th>级别</th><th>图号</th><th>图形</th><th>计算公式</th><th>公式描述</th><th>长度</th><th>根数</th><th>搭接</th><th>损耗(%)</th><th>单重(kg)</th><th>总重(kg)</th><th>钢筋归类</th><th>搭接形</th></tr>
                        </thead>
                        <tbody>
                            <tr>
                                <th>4</th><td><b>箍筋</b>.2</td><td>8</td><td class="grade"><svg><use href="#g-rebar"/></svg></td><td>195</td>
                                <td class="shape"><svg viewBox="0 0 220 44" width="220" height="44"><text x="59" y="27" class="len">170</text><path d="M107 2h62v39h-62z"/><path d="M145 14l15-11M157 23l11-13"/><text x="110" y="34" class="len red">770</text></svg></td>
                                <td>2*(770+170)+2*(12.89*d)</td><td></td><td>2086</td><td>32</td><td>0</td><td>0</td><td>0.824</td><td>26.368</td><td><b>箍筋</b></td><td><b>绑扎</b></td>
                            </tr>
                            <tr class="cur">
                                <th>5</th><td><b>箍筋.3</b></td><td>8</td><td class="grade"><svg><use href="#g-rebar"/></svg></td><td>195</td>
                                <td class="shape"><svg viewBox="0 0 220 44" width="220" height="44"><text x="59" y="27" class="len">170</text><path d="M107 2h62v39h-62z"/><path d="M145 14l15-11M157 23l11-13"/><text x="110" y="34" class="len red">470</text></svg></td>
                                <td>2*(470+170)+2*(12.89*d)</td><td></td><td>1486</td><td>16</td><td>0</td><td>0</td><td>0.587</td><td>9.392</td><td><b>箍筋</b></td><td><b>绑扎</b></td>
                            </tr>
                            <tr class="tall">
                                <th>6</th><td><b>箍筋</b>.4</td><td>8</td><td class="grade"><svg><use href="#g-rebar"/></svg></td><td>0</td>
                                <td class="shape"><svg viewBox="0 0 220 74" width="220" height="74"><path d="M112 72L58 20V13q0-7 9-7h97q9 0 9 7v7l-53 52"/><text class="pink" x="97" y="25">170</text><text class="pink" transform="translate(85 36) rotate(43)">103</text><text class="pink" transform="translate(135 48) rotate(-50)">103</text></svg></td>
                                <td>103+170+103</td><td></td><td>376</td><td>16</td><td>0</td><td>0</td><td>0.149</td><td>2.384</td><td><b>箍筋</b></td><td><b>绑扎</b></td>
                            </tr>
                            <tr class="cut"><th></th><td></td><td></td><td></td><td></td><td></td><td></td><td></td><td></td><td></td><td></td><td></td><td></td><td></td><td></td><td></td></tr>
                        </tbody>
                    </table>
                    <i class="bar"></i>
                </div>
                <i class="hbar"></i>
            </section>
        </div>

        <aside class="panel layers">
            <div class="panel-head"><i class="grip"></i><h3>显示设置</h3><button class="close" aria-label="关闭"><svg class="ico"><use href="#i-close"/></svg></button></div>
            <div class="layer-tabs"><button class="on">图元显示</button><button>楼层显示</button></div>
            <div class="layer-body">
                <table>
                    <thead><tr><th>图层构件</th><th>显示图元</th><th>显示名称</th></tr></thead>
                    <tbody id="layer-rows"></tbody>
                </table>
                <i class="bar"></i>
            </div>
            <div class="layer-foot"><button class="btn">恢复默认设置</button></div>
            <i class="monitor"></i>
        </aside>
    </main>

    <footer class="status">
        <span>层高：</span><span>3.1</span>
        <span>标高：</span><span>-0.05~3.05</span>
        <span>选中图元：1(2)</span>
        <span>隐藏图元：0</span>
        <div class="snap">
            <button class="on" aria-label="正交"><svg class="ico"><path class="a" d="M4 1v13h11M4 9h5v5"/></svg></button>
            <button class="on drop" aria-label="框选"><svg class="ico"><rect x="2" y="2" width="13" height="13" rx="2"/><circle class="a" cx="2" cy="2" r="1.500"/></svg></button>
            <button aria-label="交点"><svg class="ico"><path d="M1 1l14 14M15 1L1 15"/></svg></button>
            <button class="on drop" aria-label="角度"><svg class="ico"><path d="M1 14L12 3M1 14h13"/><circle class="a" cx="7" cy="8" r="1"/></svg></button>
            <button class="drop" aria-label="动态输入"><svg class="ico"><path d="M1 5h8M5 1v8"/><path stroke-width="4" d="M7 13h9"/></svg></button>
            <button aria-label="叠选"><svg class="ico"><path fill="currentColor" d="M3 3h8v8H3z"/><path d="M1 1h12v12H1zM15 4v8"/></svg></button>
            <button aria-label="折线"><svg class="ico"><path d="M2 14L5 5l9-3"/><circle cx="5" cy="5" r="1"/><circle cx="14" cy="2" r="1"/><path fill="currentColor" d="M10 8v6l4-3z"/></svg></button>
        </div>
        <button class="expand" aria-label="全屏"><svg class="ico"><path d="M9 7l6-6M10 1h5v5M7 9l-6 6M1 10v5h5"/></svg></button>
        <span class="done"><svg viewBox="0 0 14 14"><circle cx="7" cy="7" r="7" fill="#52b81e"/><path d="M3.500 7l2.500 3 4.500-5" stroke="#fff" fill="none"/></svg>实时计算已完成</span>
    </footer>
    <script src="app.js"></script>
</body>
</html>
```
FILE: styles.css
```
* {
    box-sizing: border-box;
}

body {
    margin: 0;
    height: 100vh;
    display: flex;
    flex-direction: column;
    overflow: hidden;
    background: #fcfcfc;
    color: #2b2b2b;
    font: 12px/16px "Noto Sans", "Noto Sans CJK SC", sans-serif;
}

button, input, select {
    font: inherit;
    color: inherit;
    border: 0;
    padding: 0;
    margin: 0;
    background: none;
}

h2, h3, ul, fieldset, hr {
    margin: 0;
    padding: 0;
    font: inherit;
}

a {
    color: inherit;
    text-decoration: none;
}

.sprite {
    position: absolute;
    width: 0;
    height: 0;
}

.sprite, .ico {
    fill: none;
}

/* icons */
.ico {
    --a: #1f78e6;
    --f: #d0e2fa;
    width: 16px;
    height: 16px;
    flex: none;
    color: #4b556b;
    stroke: currentColor;
}

.a { stroke: var(--a); }
.af { stroke: var(--a); fill: var(--f); }
.lf { fill: var(--f); }
.r { stroke: #d62929; }

:disabled .ico {
    --a: #bfbfbf;
    --f: #f2f2f2;
    color: #bfbfbf;
}

.drop::after {
    content: "";
    flex: none;
    border: 3px solid transparent;
    border-top: 4px solid #777;
    border-bottom: 0;
}

/* ribbon */
.ribbon {
    display: flex;
    flex: none;
    height: 101px;
    padding: 2px 0 4px;
    background: #fff;
    border-bottom: 1px solid #d5d5d5;
}

.group {
    display: flex;
    flex-direction: column;
    border-right: 1px solid #dcdcdc;
    white-space: nowrap;
}

.tools {
    display: grid;
    height: 76px;
    padding-top: 2px;
    align-items: start;
}

.group h2 {
    display: flex;
    justify-content: center;
    align-items: center;
    gap: 6px;
    height: 18px;
}

.col {
    display: flex;
    flex-direction: column;
    align-items: flex-start;
}

.tool {
    display: flex;
    align-items: center;
    gap: 3px;
    height: 24px;
}

.big {
    display: flex;
    flex-direction: column;
    align-items: center;
    justify-self: center;
    gap: 5px;
    padding-top: 2px;
}

.big .ico {
    width: 32px;
    height: 32px;
}

.bigdrop::after {
    content: "";
    border: 3px solid transparent;
    border-top: 4px solid #888;
    border-bottom: 0;
}

.ribbon :disabled {
    color: #b3b3b3;
}

.ribbon :disabled::after {
    border-top-color: #b3b3b3;
}

.g-select .tools { grid-template-columns: 55px 98px 79px; }
.g-select .big { padding-right: 8px; }
.g-drawing .tools { grid-template-columns: 80px 113px; padding-left: 9px; }
.g-common .tools { grid-template-columns: 67px 111px 87px; padding-left: 10px; }
.g-modify .tools { grid-template-columns: 54px 54px 63px 55px; padding-left: 10px; }
.g-draw .tools { grid-template-columns: 33px 26px; padding-left: 9px; }
.g-detect .tools { grid-template-columns: 62px 60px 56px 99px 91px; }
.g-smart .tools { grid-template-columns: 62px; padding-right: 15px; }
.g-edit .tools { grid-template-columns: 90px 79px; padding-left: 10px; }

/* filter bar */
.filters {
    display: flex;
    flex: none;
    height: 31px;
    background: #f1f1f1;
}

.pick {
    display: flex;
    align-items: center;
    width: 100px;
    border-right: 1px solid #d5d5d5;
    padding: 0 5px 0 3px;
}

.pick select {
    flex: 1;
    appearance: none;
    outline: 0;
}

.pick::after {
    content: "";
    border: 3px solid transparent;
    border-top: 4px solid #555;
    border-bottom: 0;
}

/* shell */
.work {
    flex: 1;
    min-height: 0;
    display: grid;
    grid-template-columns: 132px 392px 1fr 273px;
    grid-template-rows: 100%;
    gap: 4px;
}

.panel {
    display: flex;
    flex-direction: column;
    min-width: 0;
    min-height: 0;
    background: #fff;
    border: 1px solid #d3d3d6;
}

.panel-head {
    display: flex;
    align-items: center;
    flex: none;
    height: 29px;
    padding: 0 6px 0 5px;
    background: #eeeef0;
}

.panel-head h3 {
    margin-left: 13px;
}

.grip {
    width: 7px;
    height: 15px;
    background: radial-gradient(circle, #8a8a8a 1px, transparent 1px) 0 0/4px 4px;
}

.close {
    display: flex;
    margin-left: auto;
}

.close .ico {
    color: #999;
}

.layers .panel-head {
    padding-right: 0;
}

.tab {
    height: 29px;
    padding: 0 10px;
}

.grip + .tab {
    margin-left: 11px;
}

.tab.on {
    background: #fff;
    color: #1677ee;
}

.bar {
    flex: none;
    width: 4px;
    border-radius: 2px;
    background: #e6e6e6;
}

.btn {
    height: 25px;
    padding: 0 15px;
    border: 1px solid #c4c4c4;
    border-radius: 3px;
    background: #fff;
    white-space: nowrap;
}

/* navigation */
.nav-body {
    flex: 1;
    min-height: 0;
    display: flex;
    overflow: hidden;
}

.nav-list {
    width: 118px;
}

.cat {
    position: relative;
    display: flex;
    align-items: center;
    height: 42px;
    padding-left: 11px;
    gap: 14px;
    background: #f6f7f9;
}

.cat svg {
    width: 24px;
    height: 24px;
    fill: none;
}

.cat.active {
    background: #eaebef;
    color: #4a86e0;
}

.sub {
    display: block;
    height: 28px;
    padding-left: 21px;
    line-height: 28px;
    white-space: nowrap;
}

.sub.active {
    color: #1484f5;
}

.dot::before {
    content: "";
    position: absolute;
    left: 35px;
    top: 5px;
    width: 6px;
    height: 6px;
    border-radius: 50%;
    background: #f00;
}

.tag {
    position: absolute;
    right: 0;
    top: 5px;
    padding: 1px 1px 1px 7px;
    line-height: 17px;
    border-radius: 9px 0 0 9px;
    background: #ebc076;
    color: #6e3f07;
}

.cat .locked {
    position: absolute;
    right: 14px;
    top: 17px;
    width: 10px;
    height: 10px;
}

.nav .bar {
    height: 450px;
    margin: 12px 0 0 4px;
}

/* component list */
.side {
    display: flex;
    flex-direction: column;
    align-items: stretch;
    min-height: 0;
}

.side > .btn {
    align-self: flex-start;
    margin: 3px 0 2px 6px;
}

.comps {
    flex: none;
    height: 354px;
    margin-bottom: 3px;
}

.comp-tools {
    display: flex;
    gap: 9px;
    padding: 6px 10px 7px;
}

.comp-tools button {
    display: flex;
    align-items: center;
    justify-content: center;
    width: 32px;
    height: 26px;
    border-radius: 3px;
    background: #f5f5f5;
}

.comp-tools .pair {
    display: flex;
    gap: 1px;
}

.comp-tools .pair .drop {
    width: 12px;
}

.search {
    display: flex;
    align-items: center;
    height: 26px;
    margin: 0 9px 0 8px;
    padding: 0 9px 0 12px;
    border-radius: 13px;
    background: #f3f3f3;
}

.search input {
    flex: 1;
    outline: 0;
}

.search input::placeholder {
    color: #7a7a7a;
}

.search .ico {
    color: #888;
}

.comp-body {
    flex: 1;
    display: flex;
    justify-content: space-between;
    padding: 10px 8px 0 21px;
}

.comp-body ul {
    list-style: none;
}

.comp-body li {
    height: 24px;
    display: flex;
    align-items: center;
}

.comp-body a {
    padding: 2px 12px 3px 3px;
    border-radius: 3px;
    white-space: pre;
}

.comp-body .on {
    background: #c0d8f2;
}

.comps .bar {
    height: 87px;
    margin-top: 122px;
}

/* properties */
.props {
    flex: 1;
}

.prop-body {
    display: flex;
    flex: 1;
    min-height: 0;
    overflow: hidden;
}

.prop-list {
    flex: 1;
}

.prop-head {
    display: grid;
    grid-template-columns: 101px 1fr;
    height: 25px;
    background: #ececec;
    border-bottom: 1px solid #d5d5d5;
    border-right: 1px solid #d5d5d5;
    text-align: center;
    line-height: 25px;
}

.prop-head span:first-child {
    border-right: 1px solid #d5d5d5;
}

.prop-sec {
    display: flex;
    align-items: center;
    height: 25px;
    padding-left: 9px;
    gap: 7px;
    background: #ebebeb;
}

.prop-sec::before {
    content: "";
    border: 3px solid transparent;
    border-left: 4px solid #888;
    border-right: 0;
}

.prop-sec.open::before {
    border: 3px solid transparent;
    border-top: 4px solid #888;
    border-bottom: 0;
}

.prop {
    display: grid;
    grid-template-columns: 86px 1fr;
    align-items: center;
    height: 25px;
    padding: 2px 1px 2px 15px;
}

.prop.link label {
    color: #1757f5;
}

.prop input {
    width: 100%;
    height: 21px;
    padding: 0 2px;
    border: 1px solid #d8d8d8;
    background: #fff;
}

.props .bar {
    height: 140px;
    margin: 223px 4px 0 4px;
}

/* 3d view */
.center {
    display: flex;
    flex-direction: column;
    gap: 4px;
    min-width: 0;
    min-height: 0;
}

.view {
    position: relative;
    flex: 1;
    min-height: 0;
}

.scene {
    display: block;
    width: 100%;
    height: 100%;
}

.marks {
    fill: #fff;
    font-size: 16px;
    text-anchor: middle;
}

.axes {
    font-size: 14px;
    text-anchor: middle;
}

.dialog {
    position: absolute;
    left: 3px;
    top: 3px;
    width: 169px;
    padding: 10px 11px 11px;
    border-radius: 7px;
    background: #fff;
    box-shadow: 0 8px 32px rgba(0, 0, 0, .3);
}

.dialog h3 {
    font-size: 14px;
    line-height: 18px;
    margin-bottom: 20px;
}

.dialog fieldset {
    display: flex;
    flex-direction: column;
    min-width: 0;
    padding: 6px 10px;
    border: 1px solid #ccc;
    border-radius: 3px;
}

.dialog label {
    display: flex;
    align-items: center;
    gap: 3px;
    height: 23px;
    white-space: nowrap;
}

input[type="checkbox"] {
    appearance: none;
    display: grid;
    place-items: center;
    width: 14px;
    height: 14px;
    flex: none;
    border: 1px solid #858585;
    border-radius: 2px;
    background: #fff;
}

input[type="checkbox"]:checked {
    border-color: #2a80e4;
    background: #2a80e4;
}

input[type="checkbox"]:checked::before {
    content: "";
    width: 4px;
    height: 8px;
    margin-bottom: 2px;
    border: solid #fff;
    border-width: 0 2px 2px 0;
    transform: rotate(42deg);
}

input[type="checkbox"]:indeterminate::before {
    content: "";
    width: 10px;
    height: 10px;
    border: 1px solid #3b8df0;
    background: #9cc8fc;
}

input[type="checkbox"]:disabled {
    border-color: #b5b5b5;
    background: #efefef;
}

.fold {
    position: absolute;
    display: grid;
    place-items: center;
    background: #4b4b4b;
}

.fold svg {
    width: 10px;
    height: 12px;
    fill: none;
    stroke: #aaa;
}

.fold.left, .fold.right {
    top: 241px;
    width: 16px;
    height: 62px;
}

.fold.left {
    left: 0;
    clip-path: polygon(0 0, 100% 6%, 100% 94%, 0 100%);
}

.fold.right {
    right: 0;
    clip-path: polygon(100% 0, 0 6%, 0 94%, 100% 100%);
}

.fold.bottom {
    bottom: 0;
    left: 523px;
    width: 61px;
    height: 16px;
    clip-path: polygon(6% 0, 94% 0, 100% 100%, 0 100%);
}

.view-tools {
    position: absolute;
    top: 1px;
    right: 1px;
    display: flex;
    flex-direction: column;
    align-items: center;
    gap: 9px;
    width: 32px;
    height: 245px;
    padding-top: 12px;
    border-radius: 0 0 3px 3px;
    background: #fff;
}

.view-tools button {
    position: relative;
    display: flex;
    flex-direction: column;
    align-items: center;
}

.view-tools .drop {
    gap: 7px;
    margin-bottom: -1px;
}

.view-tools .drop::after {
    border-top-color: #4b556b;
}

.view-tools .ico {
    width: 20px;
    height: 20px;
}

.two-d span {
    position: absolute;
    left: 2px;
    bottom: 1px;
    font-size: 8px;
    line-height: 10px;
    font-weight: bold;
    color: #1f78e6;
}

.view-tools hr {
    width: 24px;
    border: 0;
    border-top: 1px solid #666;
    margin: -2px 0 -3px;
}

/* rebar table */
.rebar {
    flex: none;
    height: 266px;
}

.rebar-tools {
    display: flex;
    align-items: center;
    gap: 12px;
    flex: none;
    height: 26px;
    padding-left: 6px;
    white-space: nowrap;
}

.rebar-tools button {
    display: flex;
    align-items: center;
    gap: 4px;
}

.rebar-tools button:nth-child(-n+4) {
    margin-right: 4px;
}

.rebar-tools .drop {
    gap: 7px;
}

.rebar-body {
    display: flex;
    height: 197px;
    overflow: hidden;
    border-top: 1px solid #d8d8d8;
}

.rebar table {
    flex: 1;
    width: 0;
    table-layout: fixed;
    border-collapse: collapse;
}

.c6 { width: 6px; }
.c33 { width: 33px; }
.c36 { width: 36px; }
.c38 { width: 38px; }
.c49 { width: 49px; }
.c56 { width: 56px; }
.c61 { width: 61px; }
.c71 { width: 71px; }
.c73 { width: 73px; }
.c74 { width: 74px; }
.c166 { width: 166px; }
.c221 { width: 221px; }

.rebar th, .rebar td {
    padding: 0;
    border: 1px solid #d9d9d9;
    border-top: 0;
    border-left: 0;
    font-weight: normal;
    white-space: nowrap;
    overflow: hidden;
}

.rebar thead th {
    height: 22px;
}

.rebar thead .on {
    background: #7fb9fb;
    color: #fff;
    font-weight: bold;
}

.rebar td {
    height: 46px;
    padding-left: 3px;
    background: #c1dee0;
    color: #000;
    font: 10px/14px "Liberation Mono", "Noto Sans CJK SC", monospace;
}

.rebar td b {
    font: 12px/14px "Noto Sans", "Noto Sans CJK SC", sans-serif;
}

.rebar tbody th {
    background: #efefef;
}

.rebar .tall td {
    height: 76px;
}

.rebar .cut td {
    height: 7px;
}

.rebar .cur th {
    background: #7fb9fb;
    color: #fff;
}

.rebar .cur td:nth-child(2) {
    outline: 2px solid #7c7c7c;
    outline-offset: -2px;
}

.rebar .grade {
    padding-left: 5px;
}

.grade svg {
    display: block;
    width: 10px;
    height: 12px;
    fill: none;
}

.rebar .shape {
    padding: 0;
}

.shape svg {
    display: block;
    fill: none;
    stroke: #000;
    stroke-width: 2;
}

.shape text {
    stroke: none;
}

.len {
    fill: #111;
    font: 19px "Liberation Serif", serif;
}

.len.red {
    fill: #f0141e;
}

.pink {
    fill: #f0f;
    font: 10px "Liberation Mono", monospace;
}

.rebar-body .bar {
    height: 64px;
    margin: 77px 4px 0 4px;
}

.hbar {
    width: 72%;
    height: 4px;
    margin: 4px 0 0 12px;
    border-radius: 2px;
    background: #e8e8e8;
}

/* layer settings */
.layers {
    position: relative;
    border-right: 0;
}

.layer-tabs {
    display: flex;
    align-items: flex-end;
    gap: 3px;
    height: 26px;
    padding-left: 2px;
    border-bottom: 1px solid #ccc;
    flex: none;
}

.layer-tabs button {
    height: 21px;
    padding: 0 6px;
    border-radius: 3px 3px 0 0;
    background: #dcdcdc;
    color: #444;
}

.layer-tabs .on {
    height: 24px;
    margin-bottom: -1px;
    border: 1px solid #bbb;
    border-bottom: 0;
    background: #fff;
    color: #1f78e6;
}

.layer-body {
    display: flex;
    flex: none;
    margin-top: 3px;
    border-bottom: 1px solid #d8d8d8;
}

.layers table {
    flex: 1;
    margin-left: 2px;
    table-layout: fixed;
    border-collapse: collapse;
}

.layers th, .layers td {
    height: 21px;
    padding: 0;
    border: 1px solid #dcdcdc;
    font-weight: normal;
    line-height: 18px;
}

.layers thead th:not(:first-child) {
    width: 63px;
}

.layers td input {
    margin: 0 auto;
}

.layer-body .bar {
    height: 690px;
    margin: 12px 1px 0 4px;
}

.node {
    display: flex;
    align-items: center;
    height: 20px;
    gap: 6px;
    white-space: nowrap;
    background: linear-gradient(#dcdcdc, #dcdcdc) 8px 0/1px 100% no-repeat;
}

.node.root {
    padding-left: 2px;
    background: none;
}

.node.branch {
    padding-left: 12px;
}

.node.leaf {
    padding-left: 18px;
}

.node.leaf::before {
    content: "";
    align-self: flex-start;
    width: 16px;
    height: 20px;
    background: linear-gradient(#dcdcdc, #dcdcdc) 0 0/1px 100% no-repeat, linear-gradient(#dcdcdc, #dcdcdc) 0 10px/100% 1px no-repeat;
}

.node.last::before {
    height: 11px;
}

.toggle {
    width: 13px;
    height: 13px;
    border: 1px solid #777;
    border-radius: 2px;
    background: linear-gradient(#333, #333) center/5px 1px no-repeat #fff;
}

.layer-foot {
    display: flex;
    justify-content: flex-end;
    padding: 6px 0 0;
}

.layer-foot .btn {
    padding: 0 8px;
    margin-right: 2px;
}

.monitor {
    position: absolute;
    right: 0;
    bottom: -13px;
    width: 7px;
    height: 43px;
    border-radius: 3px 0 0 3px;
    background: #333;
}

/* status bar */
.status {
    display: flex;
    flex: none;
    height: 21px;
    padding: 3px 2px 0 2px;
    overflow: hidden;
    background: #fbfbfb;
    line-height: 25px;
    white-space: nowrap;
}

.status > span:nth-child(odd) {
    margin-right: 5px;
}

.status > span:nth-child(2) {
    margin-right: 32px;
}

.status > span:nth-child(4) {
    margin-right: 40px;
}

.status > span:nth-child(5) {
    margin-right: 28px;
}

.snap {
    display: flex;
    gap: 4px;
    margin-left: 43px;
}

.snap button {
    display: flex;
    align-items: center;
    justify-content: center;
    gap: 6px;
    min-width: 25px;
    height: 25px;
    padding: 0 3px;
    border: 1px solid #a8a8a8;
    border-radius: 3px;
    background: #fff;
}

.snap .drop {
    min-width: 36px;
}

.snap .on {
    border-color: #2f7fe6;
    background: #d6e6fb;
}

.expand {
    margin-left: 15px;
    height: 24px;
}

.status .done {
    display: flex;
    align-items: center;
    gap: 6px;
    height: 24px;
    margin-left: auto;
    margin-right: 0;
}

.done svg {
    width: 14px;
    height: 14px;
}
```
FILE: app.js
```
// [level, name, show element, show name]  1 = on, 0 = off, 2 = partial, -1 = locked
const layers = [
    [0, '所有构件', 2, 0],
    [1, '施工段', 2, 0],
    [2, '土方工程', 0, 0], [2, '基础工程', 0, 0], [2, '主体结构', 1, 0], [2, '二次结构', 0, 0],
    [2, '装饰装修', 0, 0], [2, '外墙工程', 0, 0], [2, '其它土建', 0, 0], [2, '钢筋工程', 1, 0],
    [1, '轴线', 1, -1],
    [2, '轴网', 1, -1], [2, '辅助轴线', 1, -1],
    [1, '柱', 1, 0],
    [2, '柱', 1, 0], [2, '构造柱', 1, 0], [2, '砌体柱', 1, 0], [2, '约束边缘非阴...', 1, 0],
    [1, '墙', 2, 0],
    [2, '剪力墙', 1, 0], [2, '人防门框墙', 1, 0], [2, '砌体墙', 1, 0], [2, '砌体加筋', 0, 0],
    [2, '保温墙', 1, 0], [2, '暗梁', 0, 0], [2, '墙垛', 0, 0], [2, '幕墙', 1, 0],
    [1, '门窗洞', 0, 0],
    [2, '门', 0, 0], [2, '窗', 0, 0], [2, '门联窗', 0, 0], [2, '墙洞', 0, 0], [2, '带形窗', 0, 0]
];

const tbody = document.getElementById('layer-rows');

function box(label, state) {
    const td = document.createElement('td');
    const input = document.createElement('input');
    input.type = 'checkbox';
    input.setAttribute('aria-label', label);
    input.checked = state === 1;
    input.indeterminate = state === 2;
    input.disabled = state === -1;
    td.appendChild(input);
    return td;
}

layers.forEach(([level, name, show, showName], i) => {
    const tr = document.createElement('tr');
    const td = document.createElement('td');
    const next = layers[i + 1];
    const last = level === 2 && next && next[0] < 2;
    const kind = ['root', 'branch', 'leaf'][level] + (last ? ' last' : '');
    const toggle = level < 2 ? '<button class="toggle" aria-label="折叠"></button>' : '';
    td.innerHTML = `<div class="node ${kind}">${toggle}<span>${name}</span></div>`;
    tr.append(td, box(name + ' 显示图元', show), box(name + ' 显示名称', showName));
    tbody.appendChild(tr);
});

// rebar cage: every hoop repeats at the stirrup spacing
const STEP = 81.6;
const HALF = STEP / 2;

function repeat(step, fn) {
    let d = '';
    for (let y = -2 * step; y < 543 + 2 * step; y += step) {
        d += fn(y);
    }
    return d;
}

function stroke(d, color, width) {
    return `<path d="${d}" fill="none" stroke="${color}" stroke-width="${width}"/>`;
}

function bars(xs, color, width) {
    return stroke(xs.map(x => `M${x} 0V543`).join(''), color, width);
}

const olive = '#6b6656';
const taupe = '#867c78';
let mesh = '';

// back faces
mesh += stroke(repeat(HALF, y => `M641 ${y + 16}L789 ${y - 78}M661 ${y + 35}L787 ${y - 46}`), olive, 2);
mesh += stroke(repeat(HALF, y => `M562 ${y + 45}L641 ${y - 6}`), '#6e655f', 1);
mesh += stroke(repeat(STEP, y => `M558 ${y + 45}L616 ${y + 71}M558 ${y + 86}L616 ${y + 112}L641 ${y + 97}`), olive, 2);
mesh += stroke(repeat(HALF, y => `M787 ${y + 14}L844 ${y + 37}q5 3 0 6L787 ${y + 80}`), olive, 2);
mesh += stroke(repeat(2 * STEP, y => `M793 ${y}l48 -3M793 ${y + 7}l48 -3M794 ${y - 65}l6 26M562 ${y + 41}l50 -3M562 ${y + 47}l54 -2`), olive, 2);
mesh += bars([842], olive, 3);

// neighbour cages
mesh += stroke(repeat(HALF, y => `M719 ${y + 46}L663 ${y + 23}q-5 -3 0 -6L722 ${y - 21}q5 -3 10 0L781 ${y}M732 ${y + 14}L780 ${y - 17}`), taupe, 2);
mesh += stroke(repeat(2 * STEP, y => `M716 ${y - 26}l-54 3M716 ${y - 19}l-54 3M780 ${y + 41}l-49 3M780 ${y + 48}l-49 3M708 ${y + 100}l6 26M732 ${y - 21}l7 27M720 ${y + 100}l5 26`), taupe, 2);
mesh += stroke(repeat(STEP, y => `M498 ${y + 76}L445 ${y + 78}q-5 -2 -2 -7L487 ${y + 43}q5 -3 8 3L502 ${y + 72}`), taupe, 2);
mesh += stroke(repeat(HALF, y => `M556 ${y + 17}L502 ${y + 19}q-5 -2 -2 -7L545 ${y - 15}q5 -3 8 3L560 ${y + 23}`), taupe, 2);
mesh += bars([447, 504, 547, 562, 658, 666, 719, 727, 781], taupe, 3);
mesh += bars([489, 603], '#99948f', 4);
mesh += bars([789], '#6f6b60', 3);
mesh += bars([787], '#c4c4be', 1);

// selected column hoops
mesh += stroke(repeat(STEP, y => `M548 ${y + 81}L445 ${y + 37}q-5 -3 0 -6L485 ${y + 4}q5 -3 10 0L662 ${y + 74}q5 3 0 6L641 ${y + 94}`), '#36b5b5', 2);
mesh += stroke(repeat(STEP, y => `M585 ${y + 97}L612 ${y + 109}q4 2 8 0L641 ${y + 94}`), '#00ffff', 2);
mesh += stroke(repeat(STEP, y => `M548 ${y + 81}L585 ${y + 97}`), '#22dada', 2);
mesh += stroke('M497 191l-50 2M498 197l-50 3M497 517l-50 3M498 524l-50 3M483 249l6 29M495 249l7 28M608 78l48 -2M608 84l50 -2M608 404l48 -2M608 410l50 -2', '#36b5b5', 2);
mesh += stroke('M605 162l5 29M618 170l4 22M605 488l5 29M618 495l4 22', '#00ffff', 2);
mesh += bars([615], '#b98f88', 3);
mesh += bars([617], '#ffffff', 2);

document.getElementById('mesh').innerHTML = mesh;
```
